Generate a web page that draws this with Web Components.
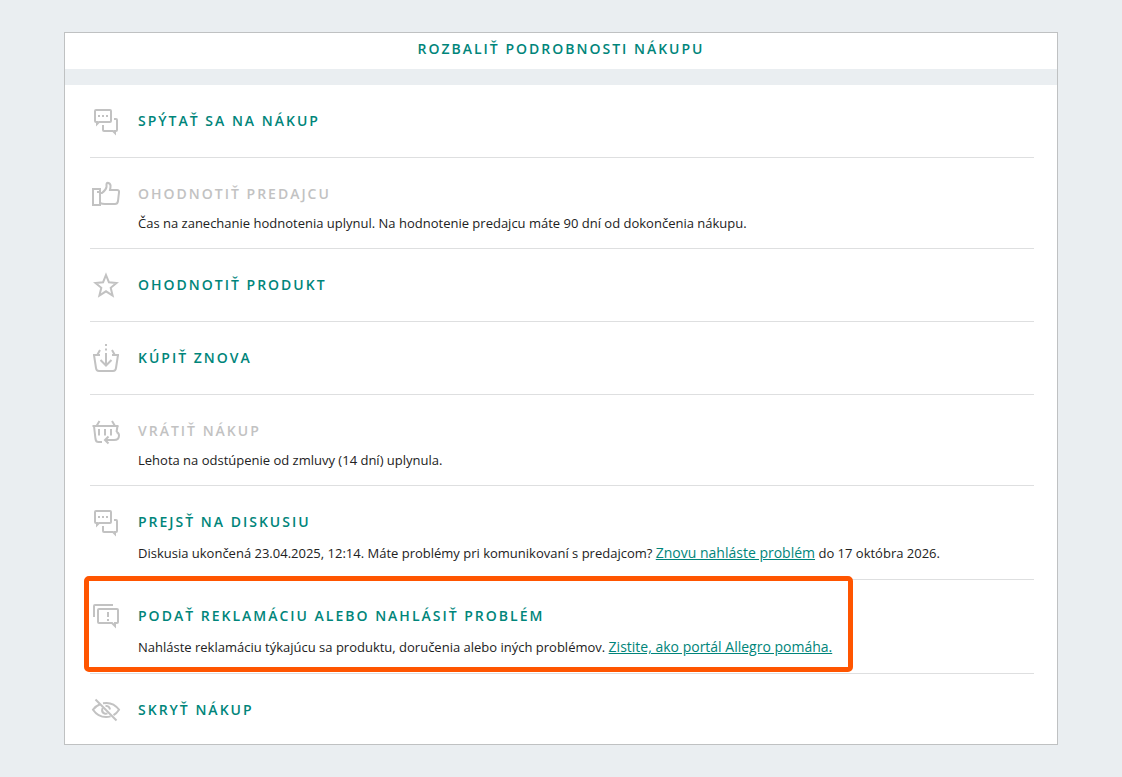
<!DOCTYPE html>
<html lang="sk">
<head>
<meta charset="utf-8">
<meta name="viewport" content="width=device-width, initial-scale=1">
<title>Podrobnosti nákupu</title>
<style>
  body {
    margin: 0;
    padding: 32px 64px;
    background: #eaeef1;
    color: #222;
    font-family: "Open Sans", "Noto Sans", sans-serif;
    font-size: 13px;
  }
</style>
</head>
<body>
<purchase-card>
  <span slot="toggle">Rozbaliť podrobnosti nákupu</span>
  <purchase-action icon="chat" label="Spýtať sa na nákup"></purchase-action>
  <purchase-action icon="thumb" label="Ohodnotiť predajcu" disabled>Čas na zanechanie hodnotenia uplynul. Na hodnotenie predajcu máte 90 dní od dokončenia nákupu.</purchase-action>
  <purchase-action icon="star" label="Ohodnotiť produkt"></purchase-action>
  <purchase-action icon="basket" label="Kúpiť znova"></purchase-action>
  <purchase-action icon="return" label="Vrátiť nákup" disabled>Lehota na odstúpenie od zmluvy (14 dní) uplynula.</purchase-action>
  <purchase-action icon="chat" label="Prejsť na diskusiu">Diskusia ukončená 23.04.2025, 12:14. Máte problémy pri komunikovaní s predajcom? <a href="#problem">Znovu nahláste problém</a> do 17 októbra 2026.</purchase-action>
  <purchase-action icon="problem" label="Podať reklamáciu alebo nahlásiť problém" highlighted>Nahláste reklamáciu týkajúcu sa produktu, doručenia alebo iných problémov. <a href="#pomoc">Zistite, ako portál Allegro pomáha.</a></purchase-action>
  <purchase-action icon="eye" label="Skryť nákup"></purchase-action>
</purchase-card>

<script>
const icons = {
  chat: `
    <path d="M6 5H20Q21 5 21 6V16Q21 17 20 17H9L7 19V17H6Q5 17 5 16V6Q5 5 6 5Z"/>
    <path d="M24 14H26Q27 14 27 15V25Q27 26 26 26H25V28L23 26H14Q13 26 13 25V20"/>
    <path d="M8 11h2M12 11h2M16 11h2"/>`,
  thumb: `
    <path d="M3 11H10V27H3Z"/>
    <path d="M7 14h2"/>
    <path d="M10 15H12Q16 12 16.5 9V6Q17 4.5 18.5 5Q21 6 20.5 9L20 12H27Q29.5 12 29 14.5L28 23Q27.5 26 25 26H15Q12 26 10 25"/>`,
  star: `
    <path d="M16 6L18.9 13.2L26.5 14L20.7 18.8L22.6 26.5L16 22.3L9.4 26.5L11.3 18.8L5.5 14L13.1 13.2Z"/>`,
  basket: `
    <path d="M10 8L7.5 12.5M22 8L24.5 12.5M3 13H10M22 13H29"/>
    <path d="M4 13L6 26Q6.3 29 9 29H23Q25.7 29 26 26L28 13"/>
    <path d="M16 2v2M16 6.5v2M16 11V23M10.5 18L16 23.5L21.5 18"/>`,
  return: `
    <path d="M2.5 11H28.5M9.5 6L6.5 11M22 6L25 11"/>
    <path d="M4 11L5.5 24Q6 27 8.5 27H12M27.5 11L26.5 17"/>
    <path d="M9 14V20.5M15 14V20.5M21 14V20.5"/>
    <path d="M26.5 17Q29 18 29 20.5Q29 25 24 25H15M18.5 21.5L15 25L18.5 28.5"/>`,
  problem: `
    <path d="M4 17V6Q4 5 5 5H23"/>
    <path d="M9 9H27Q28 9 28 10V22Q28 23 27 23H25V26L22 23H9Q8 23 8 22V10Q8 9 9 9Z"/>
    <path d="M18 12v5M18 19v2"/>`,
  eye: `
    <path d="M10 10.2Q6 11.8 3 15.7Q8 23 16 23Q18.4 23 20.6 22.4M13 9.2Q23 7.4 29 15.7Q26.6 19.4 23.5 21.2"/>
    <path d="M12.6 14Q11 18 14.5 19.5Q16 20 17.5 19.4M15.5 11.7Q19.5 12 20 15.5"/>
    <path d="M5.5 5.5L26.5 26.5"/>`
};

class PurchaseCard extends HTMLElement {
  constructor() {
    super();
    this.attachShadow({ mode: 'open' });
    this.shadowRoot.innerHTML = `
      <style>
        :host {
          display: block;
          background: white;
          border: 1px solid #bfc1c2;
        }

        button {
          display: block;
          width: 100%;
          padding: 6px 0 10px;
          border: none;
          border-bottom: 16px solid #eaeef1;
          background: none;
          color: #00857a;
          font: 600 14px/20px "Open Sans", "Noto Sans", sans-serif;
          letter-spacing: 2px;
          text-transform: uppercase;
          cursor: pointer;
        }

        #actions {
          padding: 0 23px 0 25px;
        }

        ::slotted(purchase-action:last-of-type) {
          border-bottom: none;
          padding-bottom: 18px;
        }
      </style>
      <button type="button"><slot name="toggle"></slot></button>
      <div id="actions"><slot></slot></div>
    `;
  }
}

class PurchaseAction extends HTMLElement {
  constructor() {
    super();
    this.attachShadow({ mode: 'open' });
    const label = this.getAttribute('label');
    const hasText = this.textContent.trim() !== '';
    const title = this.hasAttribute('disabled')
      ? `<button type="button" disabled>${label}</button>`
      : `<button type="button">${label}</button>`;

    this.shadowRoot.innerHTML = `
      <style>
        :host {
          display: block;
          position: relative;
          padding: 20px 0;
          border-bottom: 1px solid #dedfe0;
        }

        :host([highlighted])::after {
          content: '';
          position: absolute;
          box-sizing: border-box;
          top: -4px;
          bottom: 1px;
          left: -6px;
          width: 769px;
          border: 5px solid #ff5500;
          border-radius: 5px;
          pointer-events: none;
        }

        #row {
          display: grid;
          grid-template-columns: 32px 1fr;
          column-gap: 16px;
          align-items: center;
        }

        #row.with-text {
          margin-bottom: -6px;
        }

        svg {
          display: block;
          width: 32px;
          height: 32px;
          fill: none;
          stroke: #c2c2c2;
          stroke-width: 2;
        }

        button {
          justify-self: start;
          padding: 0;
          border: none;
          background: none;
          color: #00857a;
          font: 600 14px/20px "Open Sans", "Noto Sans", sans-serif;
          letter-spacing: 2px;
          text-transform: uppercase;
          cursor: pointer;
        }

        button:disabled {
          color: #c2c2c2;
          cursor: default;
        }

        p {
          grid-column: 2;
          margin: 3px 0 0;
          line-height: 21px;
        }

        p.with-link {
          line-height: 24px;
        }

        ::slotted(a) {
          color: #00857a;
          font-size: 14px;
        }
      </style>
      <div id="row" class="${hasText ? 'with-text' : ''}">
        <svg viewBox="0 0 32 32" aria-hidden="true">${icons[this.getAttribute('icon')]}</svg>
        ${title}
        ${hasText ? `<p class="${this.querySelector('a') ? 'with-link' : ''}"><slot></slot></p>` : ''}
      </div>
    `;
  }
}

customElements.define('purchase-card', PurchaseCard);
customElements.define('purchase-action', PurchaseAction);
</script>
</body>
</html>
